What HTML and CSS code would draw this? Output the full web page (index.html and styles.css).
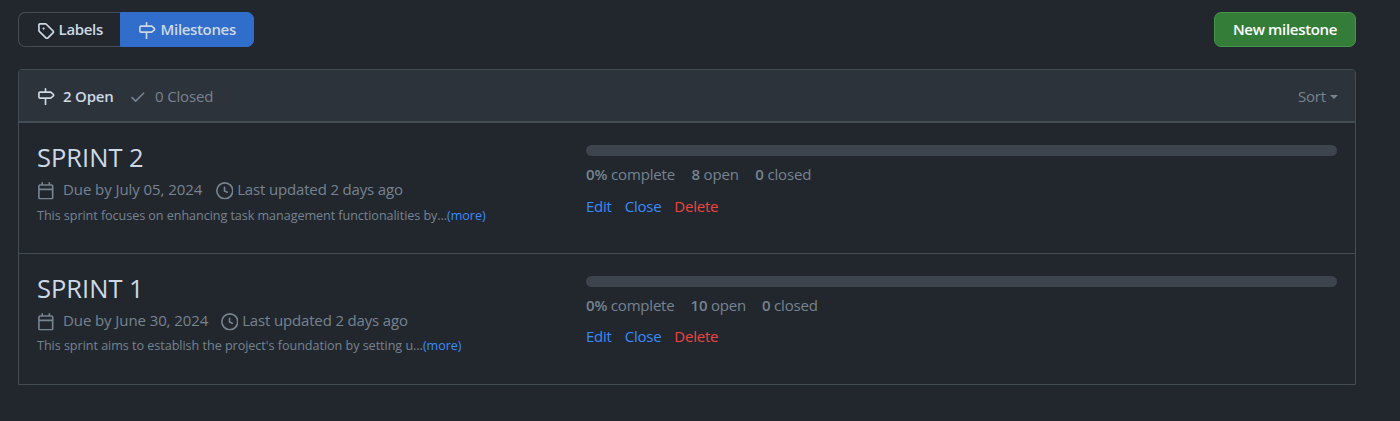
FILE: index.html
```html
<!DOCTYPE html>
<html lang="en">
<head>
<meta charset="utf-8">
<title>Milestones</title>
<link rel="stylesheet" href="styles.css">
</head>
<body>
<svg class="sprite" aria-hidden="true">
  <symbol id="tag" viewBox="0 0 16 16"><path d="M1 7.775V2.75C1 1.784 1.784 1 2.75 1h5.025c.464 0 .91.184 1.238.513l6.25 6.25a1.75 1.75 0 0 1 0 2.474l-5.026 5.026a1.75 1.75 0 0 1-2.474 0l-6.25-6.25A1.752 1.752 0 0 1 1 7.775Zm1.5 0c0 .066.026.13.073.177l6.25 6.25a.25.25 0 0 0 .354 0l5.025-5.025a.25.25 0 0 0 0-.354l-6.25-6.25a.25.25 0 0 0-.177-.073H2.75a.25.25 0 0 0-.25.25ZM6 5a1 1 0 1 1 0 2 1 1 0 0 1 0-2Z"/></symbol>
  <symbol id="milestone" viewBox="0 0 16 16"><path d="M7.75 0a.75.75 0 0 1 .75.75V3h3.634c.414 0 .814.147 1.13.414l2.07 1.75a1.75 1.75 0 0 1 0 2.672l-2.07 1.75a1.75 1.75 0 0 1-1.13.414H8.5v5.25a.75.75 0 0 1-1.5 0V10H2.75A1.75 1.75 0 0 1 1 8.25v-3.5C1 3.784 1.784 3 2.75 3H7V.75A.75.75 0 0 1 7.75 0Zm4.384 8.5a.25.25 0 0 0 .161-.06l2.07-1.75a.248.248 0 0 0 0-.38l-2.07-1.75a.25.25 0 0 0-.161-.06H2.75a.25.25 0 0 0-.25.25v3.5c0 .138.112.25.25.25h9.384Z"/></symbol>
  <symbol id="check" viewBox="0 0 16 16"><path d="M13.78 4.22a.75.75 0 0 1 0 1.06l-7.25 7.25a.75.75 0 0 1-1.06 0L2.22 9.28a.751.751 0 0 1 .018-1.042.751.751 0 0 1 1.042-.018L6 10.94l6.72-6.72a.75.75 0 0 1 1.06 0Z"/></symbol>
  <symbol id="calendar" viewBox="0 0 16 16"><path d="M4.75 0a.75.75 0 0 1 .75.75V2h5V.75a.75.75 0 0 1 1.5 0V2h1.25c.966 0 1.75.784 1.75 1.75v10.5A1.75 1.75 0 0 1 13.25 16H2.75A1.75 1.75 0 0 1 1 14.25V3.75C1 2.784 1.784 2 2.75 2H4V.75A.75.75 0 0 1 4.75 0ZM2.5 7.5v6.75c0 .138.112.25.25.25h10.5a.25.25 0 0 0 .25-.25V7.5Zm10.75-4H2.75a.25.25 0 0 0-.25.25V6h11V3.75a.25.25 0 0 0-.25-.25Z"/></symbol>
  <symbol id="clock" viewBox="0 0 16 16"><path d="M8 0a8 8 0 1 1 0 16A8 8 0 0 1 8 0ZM1.5 8a6.5 6.5 0 1 0 13 0 6.5 6.5 0 0 0-13 0Zm7-3.25v2.992l2.028.812a.75.75 0 0 1-.557 1.392l-2.5-1A.751.751 0 0 1 7 8.25v-3.5a.75.75 0 0 1 1.5 0Z"/></symbol>
</svg>
<main class="page">
  <div class="toolbar">
    <nav class="subnav">
      <a class="subnav-item labels"><svg class="icon"><use href="#tag"/></svg><span>Labels</span></a>
      <a class="subnav-item milestones"><svg class="icon"><use href="#milestone"/></svg><span>Milestones</span></a>
    </nav>
    <a class="new-button"><span>New milestone</span></a>
  </div>
  <section class="box">
    <header class="box-header">
      <a class="state open"><svg class="icon"><use href="#milestone"/></svg><span>2 Open</span></a>
      <a class="state closed"><svg class="icon"><use href="#check"/></svg><span>0 Closed</span></a>
      <a class="sort"><span>Sort</span><i class="caret"></i></a>
    </header>
    <article class="row">
      <div class="info">
        <h2 class="title">SPRINT 2</h2>
        <div class="meta">
          <svg class="icon"><use href="#calendar"/></svg><span class="due due-july">Due by July 05, 2024</span>
          <svg class="icon"><use href="#clock"/></svg><span class="updated">Last updated 2 days ago</span>
        </div>
        <p class="description">This sprint focuses on enhancing task management functionalities by...<a class="link">(more)</a></p>
      </div>
      <div class="stats">
        <div class="progress"></div>
        <div class="counts"><span><b>0%</b> complete</span><span><b>8</b> open</span><span><b>0</b> closed</span></div>
        <div class="actions"><a class="link">Edit</a><a class="link">Close</a><a class="danger">Delete</a></div>
      </div>
    </article>
    <article class="row">
      <div class="info">
        <h2 class="title">SPRINT 1</h2>
        <div class="meta">
          <svg class="icon"><use href="#calendar"/></svg><span class="due due-june">Due by June 30, 2024</span>
          <svg class="icon"><use href="#clock"/></svg><span class="updated">Last updated 2 days ago</span>
        </div>
        <p class="description">This sprint aims to establish the project's foundation by setting u...<a class="link">(more)</a></p>
      </div>
      <div class="stats">
        <div class="progress"></div>
        <div class="counts"><span><b>0%</b> complete</span><span><b>10</b> open</span><span><b>0</b> closed</span></div>
        <div class="actions"><a class="link">Edit</a><a class="link">Close</a><a class="danger">Delete</a></div>
      </div>
    </article>
  </section>
</main>
</body>
</html>
```
FILE: styles.css
```css
* { box-sizing: border-box; }
body {
  margin: 0;
  background: #22272e;
  color: #cdd9e5;
  font: 15px/23px "Open Sans", "Noto Sans", sans-serif;
  letter-spacing: -0.16px;
  white-space: nowrap;
}
.sprite { display: none; }
.icon { width: 17.6px; height: 17.6px; fill: currentColor; flex: none; }
.page { padding: 12px 44px 0 18px; }
.toolbar { display: flex; justify-content: space-between; height: 35px; }
.subnav { display: flex; }
.subnav-item { display: flex; align-items: center; border: 1px solid #444c56; font-weight: 600; letter-spacing: -0.34px; }
.subnav-item .icon { margin-top: 2px; }
.labels { width: 102px; padding-left: 18px; gap: 4px; border-right: 0; border-radius: 7px 0 0 7px; }
.milestones { width: 134px; padding-left: 17px; gap: 5px; background: #316dca; border-color: #316dca; border-radius: 0 7px 7px 0; }
.new-button {
  display: flex; align-items: center; justify-content: center;
  width: 142px; border: 1px solid #46954a; border-radius: 7px;
  background: #347d39; color: #fff; font-weight: 600; letter-spacing: -0.32px;
}
.box { margin-top: 22px; border: 1px solid #444c56; border-radius: 4px 4px 0 0; }
.box-header {
  display: flex; align-items: center; height: 53px; padding: 1px 17px 0 18px;
  background: #2d333b; border-bottom: 2px solid #444c56; border-radius: 3px 3px 0 0;
}
.state { display: flex; align-items: center; }
.state .icon { margin-top: 1px; }
.open { font-weight: 600; gap: 8.4px; width: 92px; letter-spacing: -0.2px; }
.closed { color: #768390; gap: 8.4px; }
.sort { display: flex; align-items: center; gap: 4px; margin-left: auto; color: #768390; }
.caret { border: 4px solid transparent; border-top-color: currentColor; border-bottom: 0; margin-top: 2px; }
.row { display: flex; height: 130px; padding: 22px 18px 0; }
.row + .row { height: 131px; border-top: 1px solid #444c56; }
.info { width: 549px; }
.title { margin: -2px 0 0; font-size: 25.5px; line-height: 28px; font-weight: 400; letter-spacing: 0; }
.meta { display: flex; align-items: center; height: 24px; margin-top: 6px; color: #768390; }
.meta .icon { margin-top: 4px; }
.due { margin-left: 8.4px; width: 152.6px; letter-spacing: -0.07px; }
.due-june { width: 157.6px; letter-spacing: -0.09px; }
.updated { margin-left: 4px; }
.description { margin: 5px 0 0; font-size: 12.6px; line-height: 20px; letter-spacing: -0.06px; color: #768390; }
.row + .row .description { margin-top: 4px; letter-spacing: -0.04px; }
.link { color: #388bfd; }
.danger { color: #f0443e; }
.stats { flex: 1; color: #768390; }
.progress { height: 11px; border-radius: 6px; background: #3e444d; }
.counts { display: flex; gap: 16.4px; margin-top: 7px; letter-spacing: -0.15px; }
.row + .row .counts { gap: 16px; letter-spacing: -0.2px; }
.counts b { font-weight: 600; }
.actions { display: flex; gap: 13px; margin-top: 9px; letter-spacing: -0.24px; }
.row + .row .actions { margin-top: 8px; }
```
